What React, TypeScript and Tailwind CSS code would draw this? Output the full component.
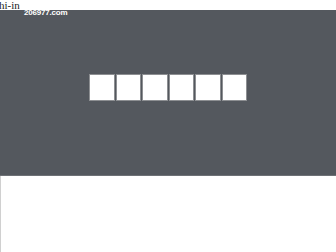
import React from 'react';

const App: React.FC = () => {
  const cells = [0, 1, 2, 3, 4, 5];

  return (
    <div className="w-[336px] h-[252px] bg-white overflow-hidden" style={{ fontFamily: '"Liberation Serif", serif' }}>
      {/* top strip */}
      <div className="h-[10px] bg-white relative z-10 overflow-hidden">
        <span className="block text-[11px] leading-[11px] text-[#222] -ml-[1px]">hi-in</span>
      </div>

      {/* dark banner */}
      <div className="h-[166px] bg-[#54585e] border-b border-[#6e7176] relative">
        <div
          className="absolute left-[24px] -top-[2px] text-[8px] leading-[9px] font-bold text-white tracking-[-0.2px]"
          style={{ fontFamily: '"Liberation Sans", sans-serif' }}
        >
          206977.com
        </div>
        <div className="pt-[64px] pl-[89px] flex gap-[1px]">
          {cells.map((i) => (
            <div key={i} className="w-[25.5px] h-[27px] bg-white border border-[#8d8f92]" />
          ))}
        </div>
      </div>

      {/* bottom white area */}
      <div className="h-[76px] border-l border-[#d0d0d0]" />
    </div>
  );
};

export default App;
